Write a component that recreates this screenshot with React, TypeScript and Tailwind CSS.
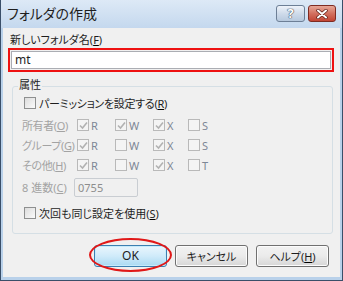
import React from 'react';

const font = "font-['Noto_Sans','Noto_Sans_CJK_JP',sans-serif] [font-feature-settings:'palt']";

const Key: React.FC<{ k: string; dim?: boolean }> = ({ k, dim }) => (
  <span>
    (<span className={dim ? 'underline' : 'underline decoration-[#000]'}>{k}</span>)
  </span>
);

const Box: React.FC<{ checked?: boolean; disabled?: boolean }> = ({ checked, disabled }) => (
  <span
    className={`relative flex shrink-0 items-center justify-center w-[12px] h-[12px] border ${
      disabled ? 'border-[#b9b9b9] bg-[#f4f4f4]' : 'border-[#8e8f8f] bg-gradient-to-br from-[#dcdcdc] to-[#fbfbfb]'
    }`}
  >
    {checked && (
      <svg width="9" height="9" viewBox="0 0 9 9">
        <path d="M1 4.5 L3.5 7 L8 1.5" fill="none" stroke="#b2b2b2" strokeWidth="1.6" />
      </svg>
    )}
  </span>
);

const Perm: React.FC<{ letter: string; checked?: boolean; w: string }> = ({ letter, checked, w }) => (
  <div className={`flex items-center gap-[2px] ${w}`}>
    <Box checked={checked} disabled />
    <span className="text-[11px] text-[#7d8796] leading-none">{letter}</span>
  </div>
);

const rows = [
  { label: '所有者', key: 'O', x: true, w: true, last: 'S' },
  { label: 'グループ', key: 'G', x: true, w: false, last: 'S' },
  { label: 'その他', key: 'H', x: true, w: false, last: 'T' },
];

const App: React.FC = () => {
  return (
    <div className={`${font} relative w-[343px] h-[281px] overflow-hidden flex flex-col bg-[#b9d1ea] border-x border-b border-[#3a4f69]`}>
      {/* タイトルバー */}
      <div className="relative h-[28px] shrink-0 flex items-center pl-[6px] bg-gradient-to-b from-[#dde9f6] to-[#c4d8ee]">
        <span className="text-[14px] text-[#1e1e1e] leading-none">フォルダの作成</span>
        <div className="absolute top-[5px] right-[6px] flex gap-[3px]">
          <div className="w-[29px] h-[17px] rounded-[3px] border border-[#6d7f96] bg-gradient-to-b from-[#eef3fa] via-[#cfdbea] to-[#b7c9de] flex items-center justify-center text-[13px] font-bold text-white leading-none [text-shadow:0_0_1px_#3b4a5c,0_0_1px_#3b4a5c,0_0_1px_#3b4a5c]">
            ?
          </div>
          <div className="w-[28px] h-[17px] rounded-[3px] border border-[#7e2b22] bg-gradient-to-b from-[#e7a797] via-[#d2705f] to-[#c24434] flex items-center justify-center">
            <svg width="12" height="10" viewBox="0 0 12 10">
              <path d="M2 1.5 L10 8.5 M10 1.5 L2 8.5" stroke="#5a1a14" strokeWidth="3.4" strokeLinecap="round" />
              <path d="M2 1.5 L10 8.5 M10 1.5 L2 8.5" stroke="#fff" strokeWidth="2" strokeLinecap="round" />
            </svg>
          </div>
        </div>
      </div>

      {/* 本体 */}
      <div className="flex-1 mx-[2px] mb-[3px] bg-[#f0f0f0] flex flex-col pt-[5px] text-[11px] text-[#1e1e1e]">
        <div className="pl-[7px] h-[14px] leading-[14px]">
          新しいフォルダ名<Key k="F" />
        </div>
        <div className="mt-[1px] ml-[5px] mr-[6px] h-[24px] border-2 border-[#ee1111] p-[1px]">
          <div className="h-full border border-[#abadb3] bg-white flex items-center pl-[3px] text-[12px] leading-none">
            mt
          </div>
        </div>

        {/* 属性 */}
        <div className="relative mt-[14px] ml-[9px] mr-[7px] border border-[#d5dfe5] rounded-[3px] pt-[9px] pb-[13px] pl-[9px]">
          <span className="absolute -top-[9px] left-[5px] px-[1px] bg-[#f0f0f0] leading-[14px]">属性</span>
          <div className="flex items-center h-[14px] gap-[3px] pl-[2px]">
            <Box />
            <span className="leading-none whitespace-nowrap tracking-[-0.3px]">
              パーミッションを設定する<Key k="R" />
            </span>
          </div>
          <div className="mt-[5px] flex flex-col text-[#a3a3a3]">
            {rows.map((r) => (
              <div key={r.key} className="flex items-center h-[20px]">
                <span className="w-[55px] shrink-0 leading-none whitespace-nowrap tracking-[-0.4px]">
                  {r.label}
                  <Key k={r.key} dim />
                </span>
                <Perm letter="R" checked w="w-[38px]" />
                <Perm letter="W" checked={r.w} w="w-[38px]" />
                <Perm letter="X" checked={r.x} w="w-[35px]" />
                <Perm letter={r.last} w="w-[30px]" />
              </div>
            ))}
            <div className="mt-[3px] flex items-center h-[19px]">
              <span className="w-[52px] shrink-0 leading-none whitespace-nowrap">
                8 進数<Key k="C" dim />
              </span>
              <div className="w-[64px] h-[19px] border border-[#c9cdd2] rounded-[2px] flex items-center pl-[3px] text-[#8d8d8d] leading-none">
                0755
              </div>
            </div>
          </div>
          <div className="mt-[9px] flex items-center h-[14px] gap-[3px] pl-[2px]">
            <Box />
            <span className="leading-none whitespace-nowrap">
              次回も同じ設定を使用<Key k="S" />
            </span>
          </div>
        </div>

        {/* ボタン */}
        <div className="mt-[11px] flex justify-end gap-[8px] pr-[11px]">
          <div className="relative">
            <div className="w-[73px] h-[22px] rounded-[3px] border border-[#3c7fb1] bg-gradient-to-b from-[#eaf6fd] via-[#d0ebfa] to-[#a9d9f2] shadow-[inset_0_0_0_1px_#c6ebfb] flex items-center justify-center text-[12px] leading-none">
              OK
            </div>
            <div className="absolute -left-[5px] -top-[7px] w-[83px] h-[34px] rounded-[50%] border-2 border-[#e01818]" />
          </div>
          <div className="w-[73px] h-[22px] rounded-[3px] border border-[#707070] bg-gradient-to-b from-[#f2f2f2] via-[#ebebeb] to-[#d6d6d6] shadow-[inset_0_0_0_1px_#fcfcfc] flex items-center justify-center leading-none">
            キャンセル
          </div>
          <div className="w-[73px] h-[22px] rounded-[3px] border border-[#707070] bg-gradient-to-b from-[#f2f2f2] via-[#ebebeb] to-[#d6d6d6] shadow-[inset_0_0_0_1px_#fcfcfc] flex items-center justify-center leading-none">
            ヘルプ<Key k="H" />
          </div>
        </div>
      </div>
    </div>
  );
};

export default App;
